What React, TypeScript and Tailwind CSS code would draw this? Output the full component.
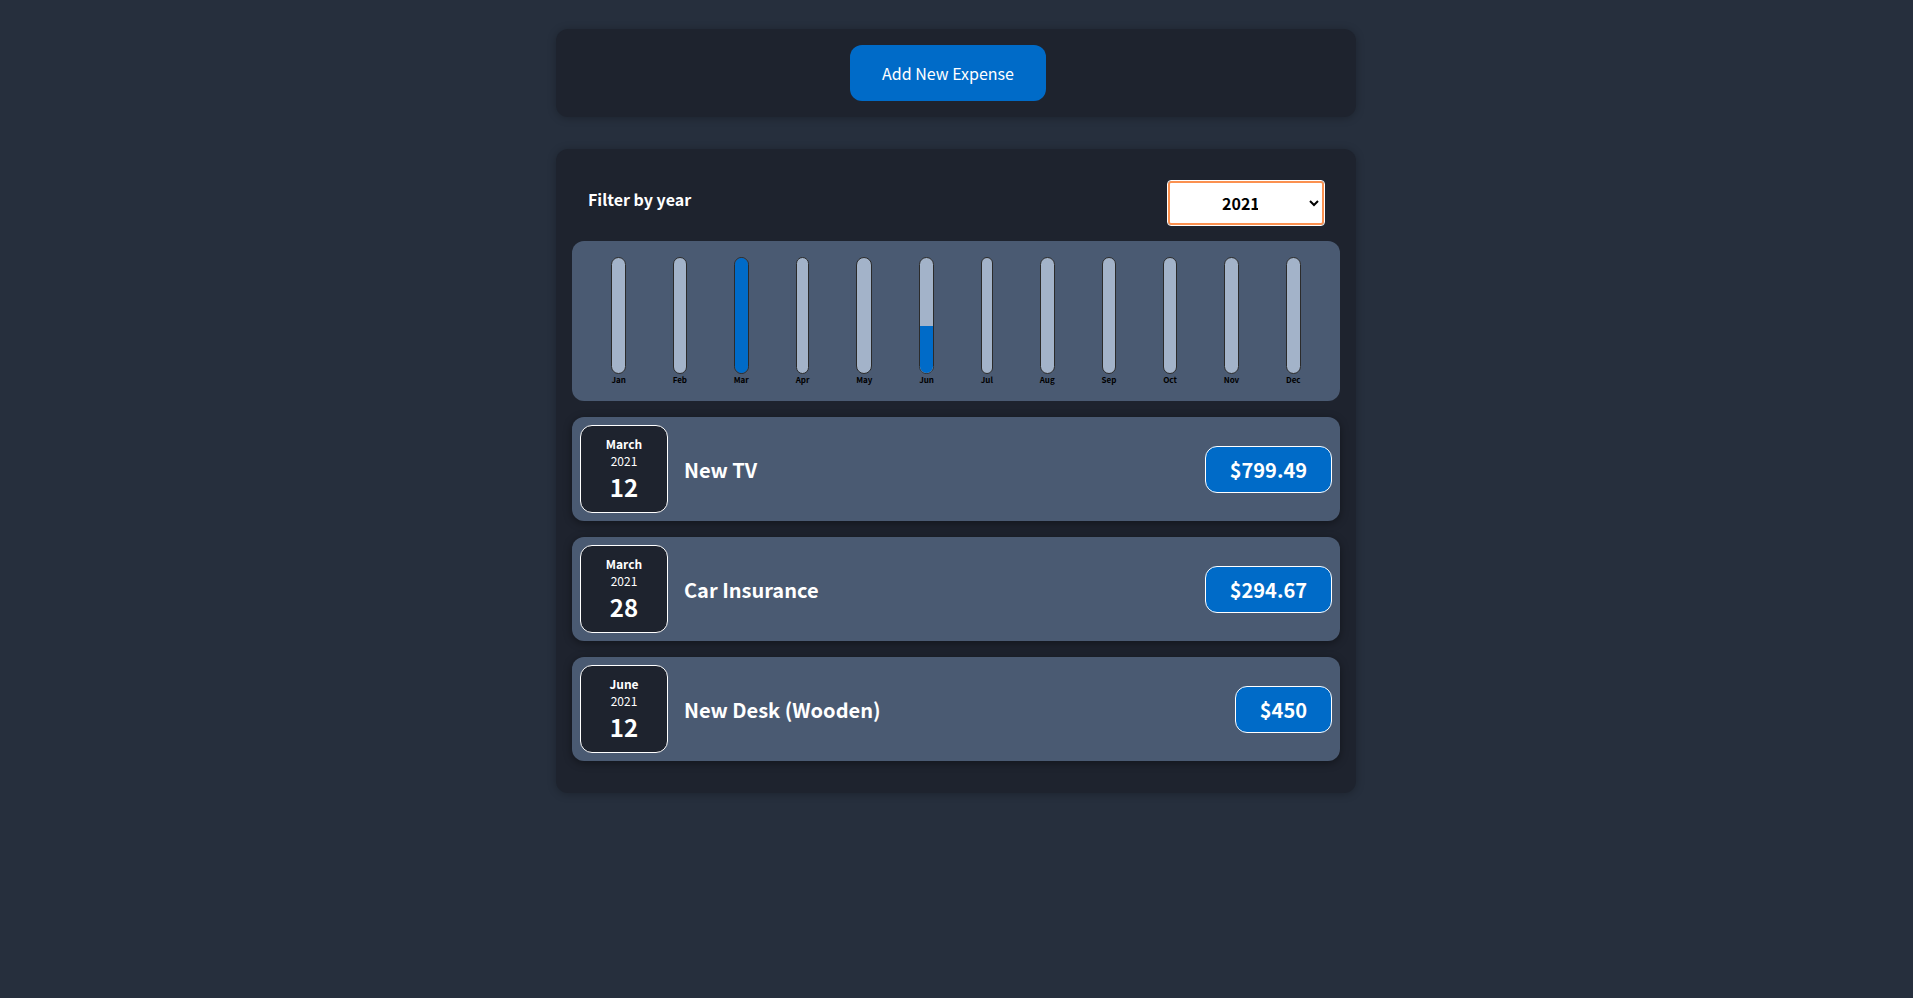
import { useState } from "react";

interface Expense {
  id: string;
  title: string;
  amount: number;
  month: string;
  year: number;
  day: number;
}

const EXPENSES: Expense[] = [
  { id: "e1", title: "New TV", amount: 799.49, month: "March", year: 2021, day: 12 },
  { id: "e2", title: "Car Insurance", amount: 294.67, month: "March", year: 2021, day: 28 },
  { id: "e3", title: "New Desk (Wooden)", amount: 450, month: "June", year: 2021, day: 12 },
];

const MONTHS = [
  "January", "February", "March", "April", "May", "June",
  "July", "August", "September", "October", "November", "December",
];

function Chart({ expenses }: { expenses: Expense[] }) {
  const totals = MONTHS.map((m) =>
    expenses.filter((e) => e.month === m).reduce((sum, e) => sum + e.amount, 0)
  );
  const max = Math.max(...totals);
  return (
    <div className="flex h-40 justify-around rounded-xl bg-[#4a5a72] p-4">
      {MONTHS.map((m, i) => (
        <div key={m} className="flex flex-col items-center">
          <div className="flex w-full flex-1 flex-col justify-end overflow-hidden rounded-xl border border-[#2b2b2b] bg-[#a3b3c9]">
            <div
              className="bg-[#006bc8]"
              style={{ height: `${max ? Math.round((totals[i] / max) * 100) : 0}%` }}
            />
          </div>
          <span className="text-[8px] leading-[11px] font-bold text-black">{m.slice(0, 3)}</span>
        </div>
      ))}
    </div>
  );
}

function ExpenseItem({ expense }: { expense: Expense }) {
  return (
    <li className="flex items-center gap-4 rounded-xl bg-[#4a5a72] p-2 shadow-[0_2px_8px_rgba(0,0,0,0.4)]">
      <time className="flex size-[88px] shrink-0 flex-col items-center justify-center rounded-xl border border-white bg-[#1e232e] text-white">
        <span className="text-xs leading-[17px] font-bold">{expense.month}</span>
        <span className="text-xs leading-[17px]">{expense.year}</span>
        <span className="text-2xl leading-[35px] font-bold">{expense.day}</span>
      </time>
      <h2 className="flex-1 text-xl leading-[29px] font-bold text-white">{expense.title}</h2>
      <div className="rounded-xl border border-white bg-[#006bc8] px-6 py-2 text-xl leading-[29px] font-bold text-white">
        ${expense.amount}
      </div>
    </li>
  );
}

export default function App() {
  const [year, setYear] = useState("2021");
  const shown = EXPENSES.filter((e) => String(e.year) === year);
  return (
    <div className="flex min-h-screen flex-col items-center gap-8 bg-[#262f3d] pt-[29px] pr-[17px] pb-8 pl-4 font-['Noto_Sans_CJK_JP',sans-serif]">
      <section className="flex w-full max-w-[800px] justify-center rounded-xl bg-[#1e232e] p-4 shadow-[0_1px_8px_rgba(0,0,0,0.25)]">
        <button
          type="button"
          className="mr-4 rounded-xl bg-[#006bc8] px-8 py-4 text-base text-white"
        >
          Add New Expense
        </button>
      </section>
      <section className="w-full max-w-[800px] rounded-xl bg-[#1e232e] px-4 py-8 shadow-[0_1px_8px_rgba(0,0,0,0.25)]">
        <div className="mb-4 flex items-center justify-between px-4">
          <label htmlFor="year" className="pb-2 text-base font-bold text-white">
            Filter by year
          </label>
          <select
            id="year"
            value={year}
            onChange={(e) => setYear(e.target.value)}
            className="h-11 w-[156px] rounded-[3px] border-2 border-[#fb9150] bg-white px-12 text-base font-bold text-black outline-1 outline-white"
          >
            <option value="2022">2022</option>
            <option value="2021">2021</option>
            <option value="2020">2020</option>
            <option value="2019">2019</option>
          </select>
        </div>
        <Chart expenses={shown} />
        <ul className="mt-4 flex flex-col gap-4">
          {shown.map((e) => (
            <ExpenseItem key={e.id} expense={e} />
          ))}
        </ul>
      </section>
    </div>
  );
}
